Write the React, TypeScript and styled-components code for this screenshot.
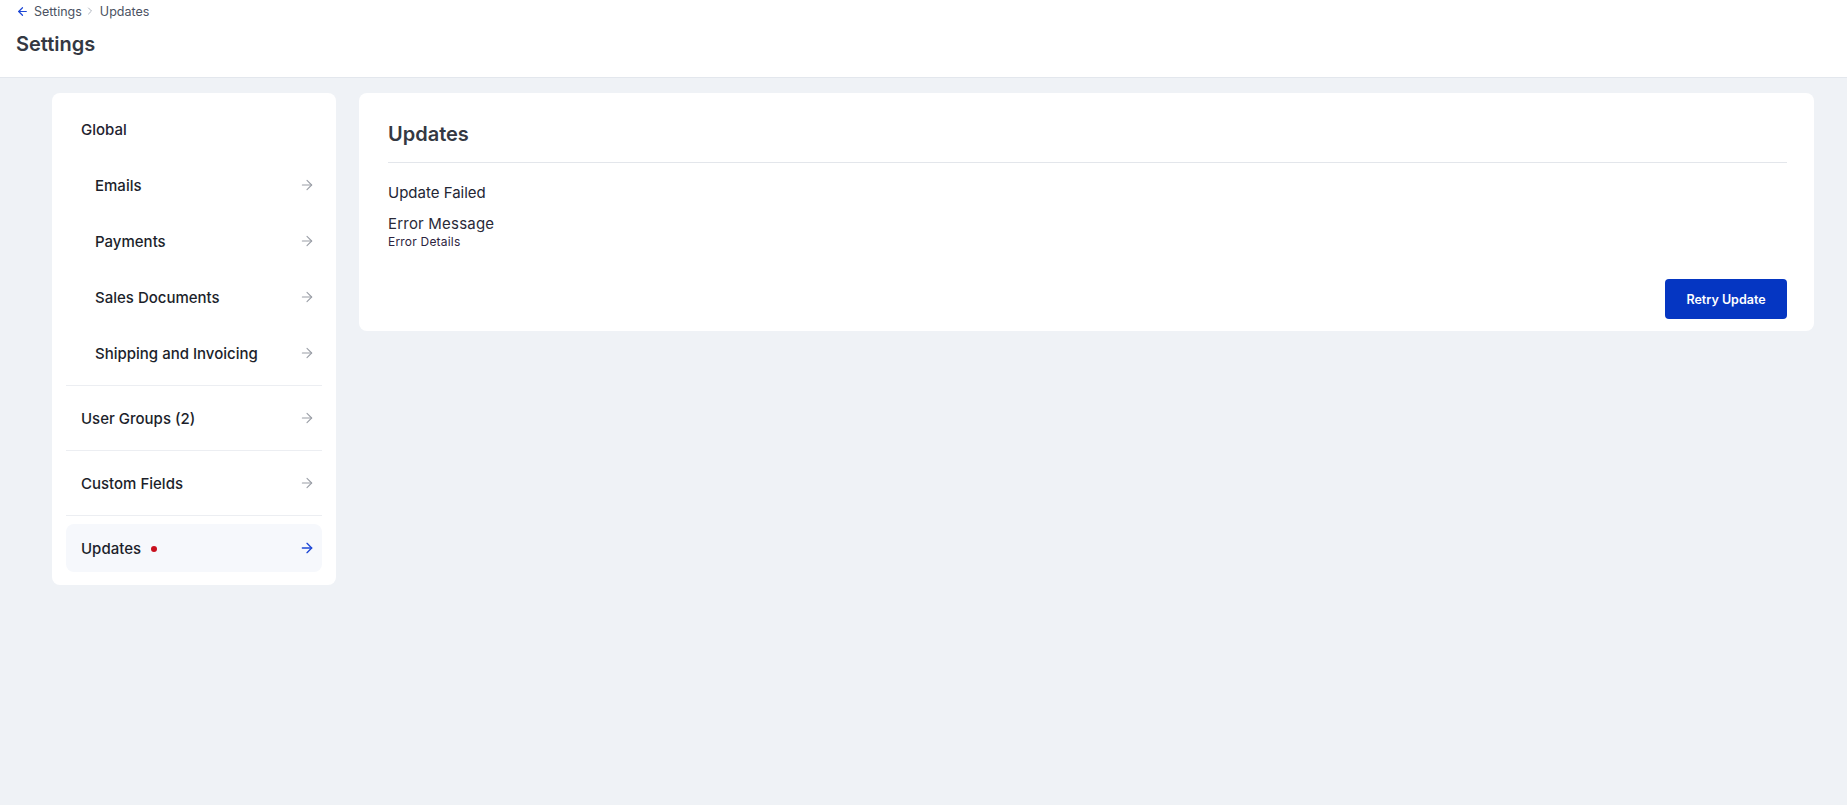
import React from "react";
import styled, { createGlobalStyle } from "styled-components";
import { ArrowRight, ArrowLeft, ChevronRight } from "lucide-react";

const Global = createGlobalStyle`
  html, body { margin: 0; padding: 0; }
  body {
    background: #eff2f6;
    font-family: Inter, "Noto Sans", sans-serif;
    color: #1f2330;
    -webkit-font-smoothing: antialiased;
  }
  * { box-sizing: border-box; }
`;

const Page = styled.div`
  min-height: 805px;
  background: #eff2f6;
`;

const Header = styled.header`
  background: #ffffff;
  border-bottom: 1px solid #e3e7ed;
  height: 78px;
  padding: 2px 16px 0 16px;
  display: flex;
  flex-direction: column;
`;

const Breadcrumb = styled.nav`
  display: flex;
  align-items: center;
  height: 18px;
  font-size: 12.5px;
  color: #4b5262;
  gap: 2px;
`;

const CrumbLink = styled.span`
  display: inline-flex;
  align-items: center;
  gap: 5px;
  color: #4b5262;
`;

const CrumbSep = styled.span`
  display: inline-flex;
  align-items: center;
  color: #9aa1ad;
  margin: 0 2px 0 0;
`;

const Title = styled.h1`
  margin: 11px 0 0 0;
  font-size: 20px;
  line-height: 26px;
  font-weight: 600;
  color: #343842;
`;

const Body = styled.div`
  display: flex;
  align-items: flex-start;
  gap: 23px;
  padding: 15px 33px 0 52px;
`;

const Sidebar = styled.aside`
  width: 284px;
  flex-shrink: 0;
  background: #ffffff;
  border-radius: 8px;
  padding: 4px 14px 6px 14px;
`;

const Section = styled.div<{ $last?: boolean }>`
  display: flex;
  flex-direction: column;
  gap: 8px;
  padding: 8px 0 ${(p) => (p.$last ? "7px" : "8px")} 0;
  border-bottom: ${(p) => (p.$last ? "none" : "1px solid #eceef2")};
`;

const GroupLabel = styled.div`
  height: 48px;
  display: flex;
  align-items: center;
  padding-left: 15px;
  font-size: 15px;
  font-weight: 500;
  color: #1f2330;
`;

const NavItem = styled.a<{ $nested?: boolean; $active?: boolean }>`
  height: 48px;
  display: flex;
  align-items: center;
  justify-content: space-between;
  padding: 0 7px 0 ${(p) => (p.$nested ? "29px" : "15px")};
  border-radius: 8px;
  background: ${(p) => (p.$active ? "#f6f8fc" : "transparent")};
  font-size: 15px;
  font-weight: 500;
  color: #1c1f2b;
  text-decoration: none;
  cursor: pointer;
`;

const ItemLabel = styled.span`
  display: inline-flex;
  align-items: center;
  gap: 10px;
`;

const Dot = styled.span`
  width: 6px;
  height: 6px;
  border-radius: 50%;
  background: #c8101e;
  display: inline-block;
  margin-top: 1px;
`;

const ArrowIcon = styled.span<{ $active?: boolean }>`
  display: inline-flex;
  color: ${(p) => (p.$active ? "#1d47d6" : "#9a9ea6")};
`;

const Main = styled.section`
  flex: 1;
  background: #ffffff;
  border-radius: 8px;
  padding: 0 27px 12px 29px;
  display: flex;
  flex-direction: column;
`;

const MainTitle = styled.h2`
  margin: 0;
  height: 70px;
  display: flex;
  align-items: center;
  padding-top: 13px;
  font-size: 20px;
  font-weight: 600;
  color: #343842;
  border-bottom: 1px solid #e3e6eb;
`;

const StatusTitle = styled.div`
  margin-top: 20px;
  font-size: 15px;
  line-height: 20px;
  font-weight: 400;
  color: #232634;
`;

const ErrorMessage = styled.div`
  margin-top: 11px;
  font-size: 15px;
  line-height: 20px;
  font-weight: 400;
  letter-spacing: 0.2px;
  color: #2a2a38;
`;

const ErrorDetails = styled.div`
  font-size: 12px;
  line-height: 16px;
  letter-spacing: 0.2px;
  color: #2d2440;
`;

const Actions = styled.div`
  display: flex;
  justify-content: flex-end;
  margin-top: 29px;
`;

const PrimaryButton = styled.button`
  width: 122px;
  height: 40px;
  border: none;
  border-radius: 4px;
  background: #0536c2;
  color: #ffffff;
  font-family: Inter, "Noto Sans", sans-serif;
  font-size: 12.5px;
  font-weight: 600;
  cursor: pointer;
`;

type Item = { label: string; nested?: boolean; active?: boolean; dot?: boolean };

const NavLink = ({ label, nested, active, dot }: Item) => (
  <NavItem $nested={nested} $active={active}>
    <ItemLabel>
      {label}
      {dot && <Dot />}
    </ItemLabel>
    <ArrowIcon $active={active}>
      <ArrowRight size={16} strokeWidth={active ? 2 : 1.6} />
    </ArrowIcon>
  </NavItem>
);

export default function App() {
  return (
    <Page>
      <Global />
      <Header>
        <Breadcrumb>
          <CrumbLink>
            <ArrowLeft size={13} color="#1d47d6" strokeWidth={2.2} />
            Settings
          </CrumbLink>
          <CrumbSep>
            <ChevronRight size={12} strokeWidth={1.6} />
          </CrumbSep>
          <span>Updates</span>
        </Breadcrumb>
        <Title>Settings</Title>
      </Header>
      <Body>
        <Sidebar>
          <Section>
            <GroupLabel>Global</GroupLabel>
            <NavLink label="Emails" nested />
            <NavLink label="Payments" nested />
            <NavLink label="Sales Documents" nested />
            <NavLink label="Shipping and Invoicing" nested />
          </Section>
          <Section>
            <NavLink label="User Groups (2)" />
          </Section>
          <Section>
            <NavLink label="Custom Fields" />
          </Section>
          <Section $last>
            <NavLink label="Updates" active dot />
          </Section>
        </Sidebar>
        <Main>
          <MainTitle>Updates</MainTitle>
          <StatusTitle>Update Failed</StatusTitle>
          <ErrorMessage>Error Message</ErrorMessage>
          <ErrorDetails>Error Details</ErrorDetails>
          <Actions>
            <PrimaryButton>Retry Update</PrimaryButton>
          </Actions>
        </Main>
      </Body>
    </Page>
  );
}
